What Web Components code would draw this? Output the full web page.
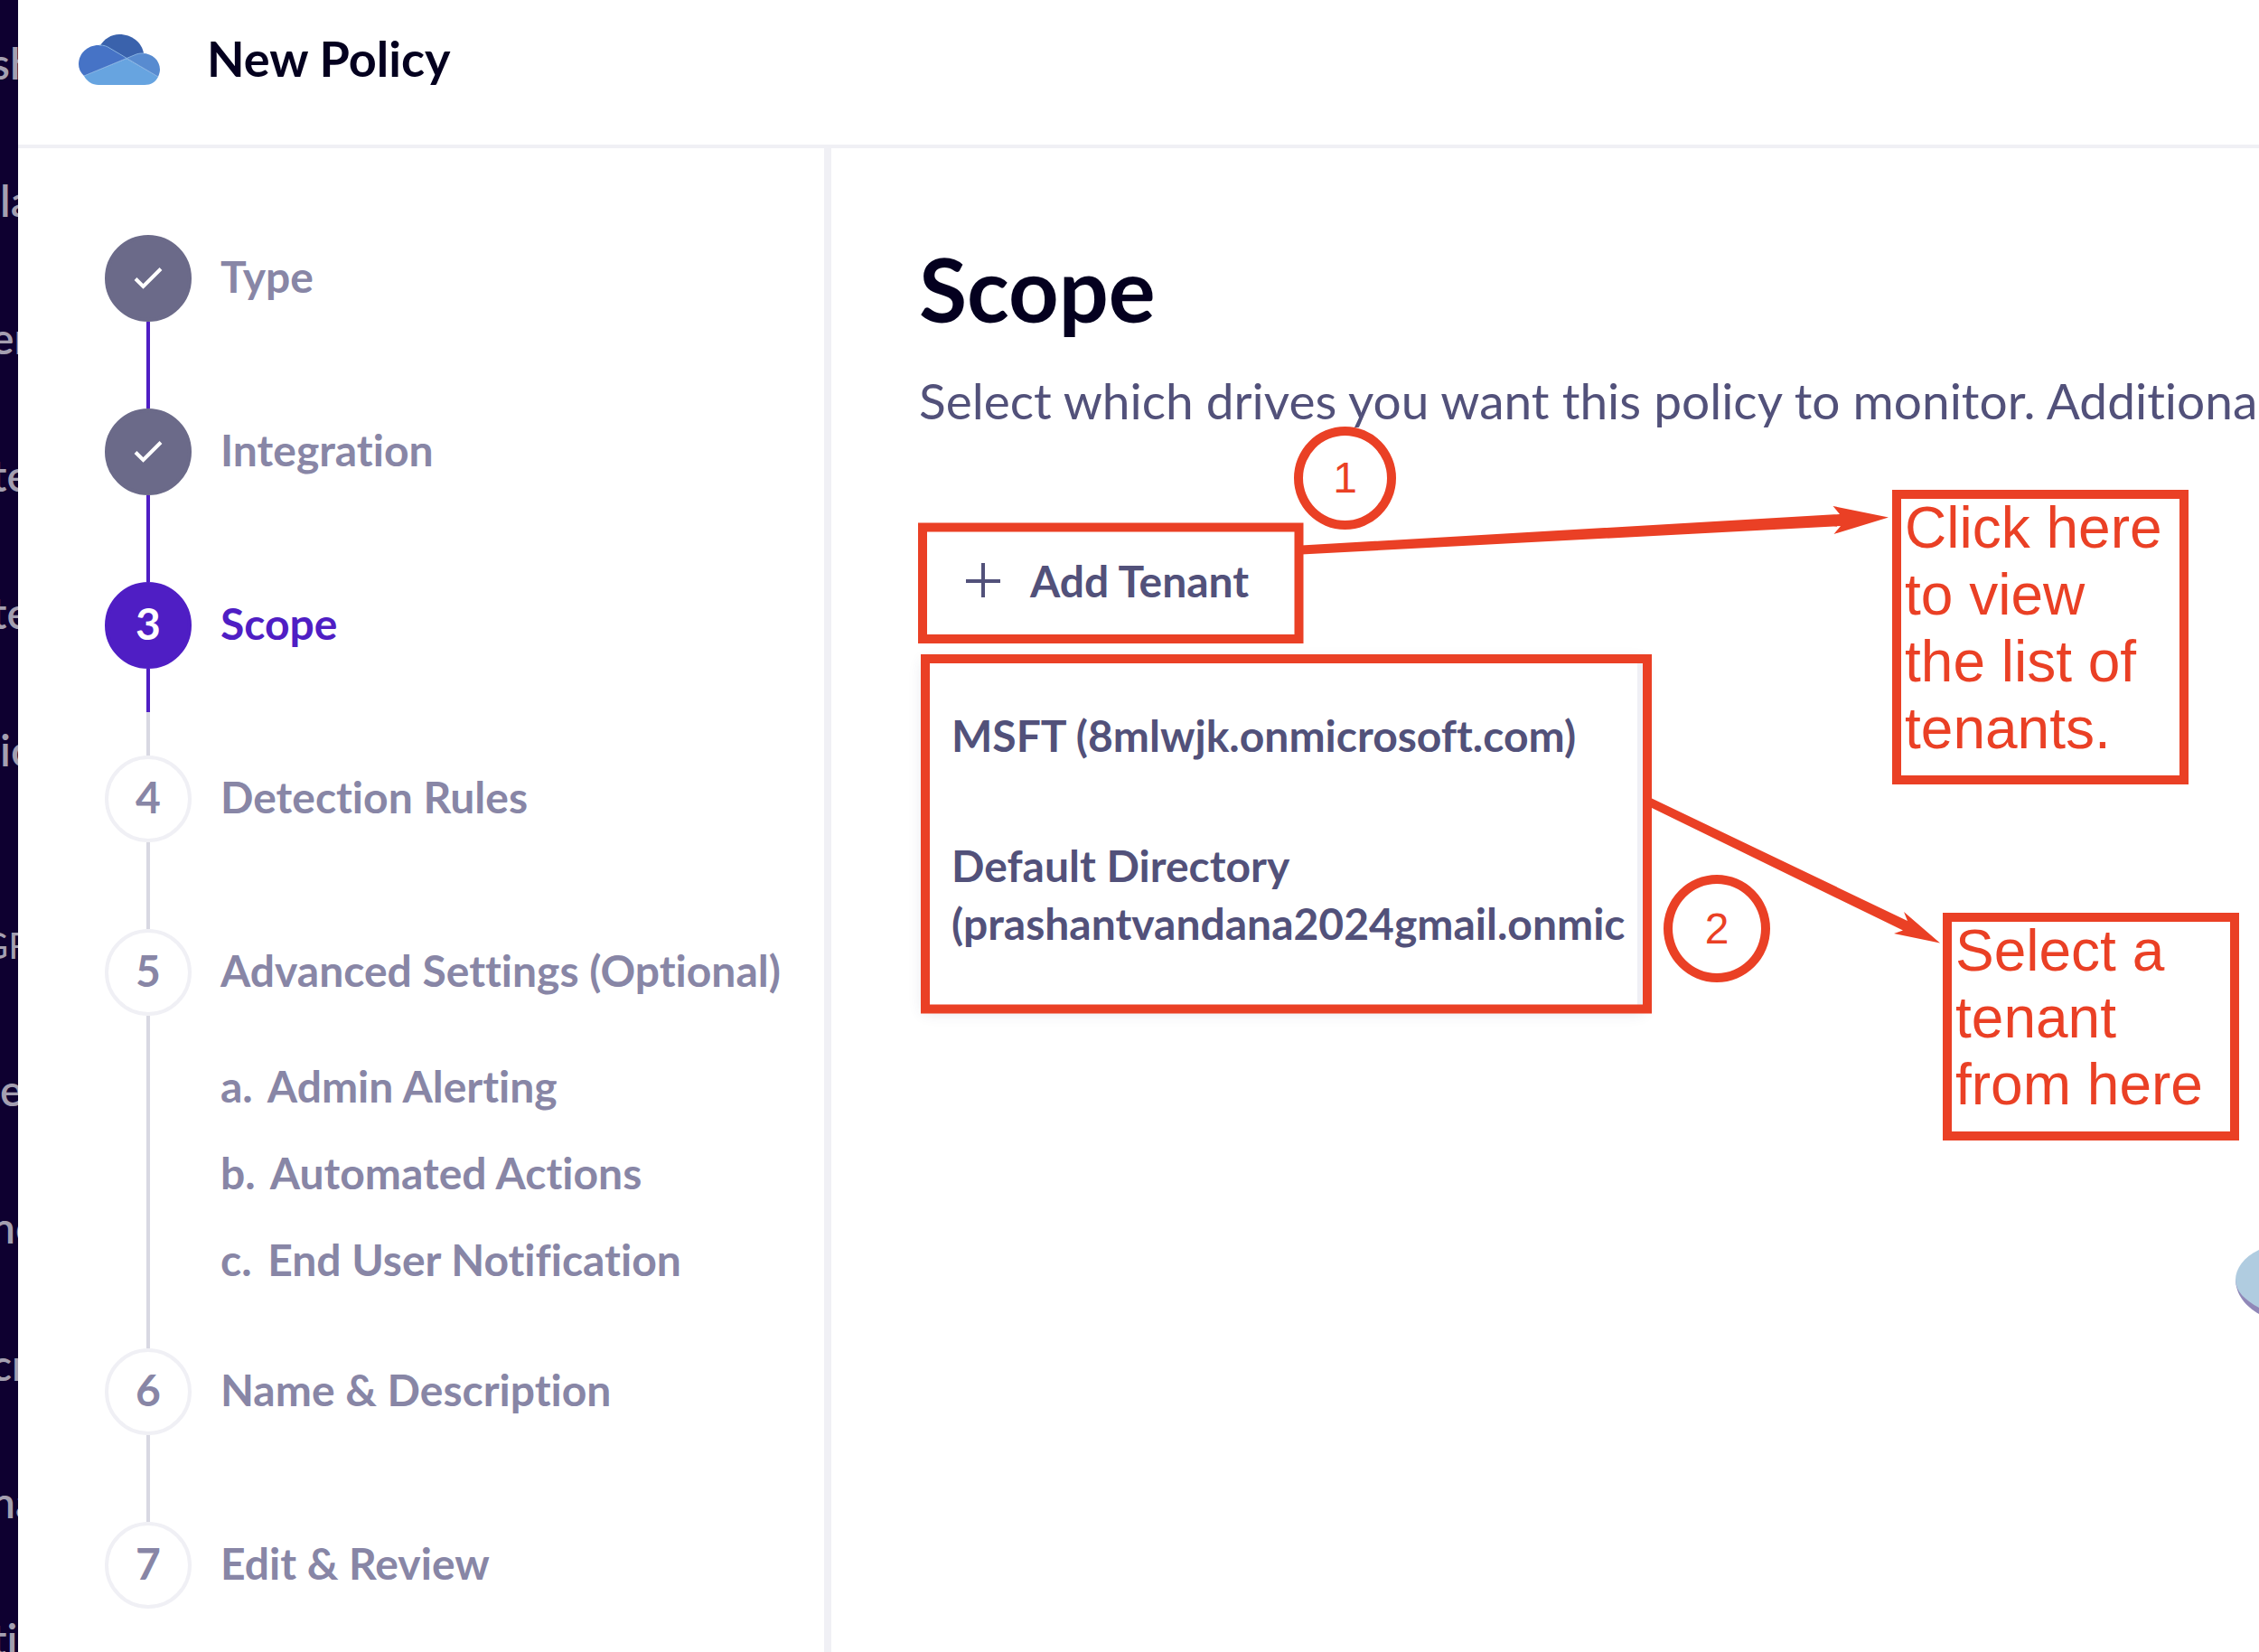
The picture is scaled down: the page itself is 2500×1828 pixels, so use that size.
<!DOCTYPE html>
<html lang="en">
<head>
<meta charset="utf-8">
<title>New Policy</title>
<style>
  body { margin: 0; font-family: Lato, "Open Sans", sans-serif; font-variant-ligatures: none; background: #fff; }
</style>
</head>
<body>
<policy-page></policy-page>

<script>
const define = (name, html, setup) => {
  const template = document.createElement('template');
  template.innerHTML = html;
  customElements.define(name, class extends HTMLElement {
    connectedCallback() {
      if (this.shadowRoot) return;
      this.attachShadow({ mode: 'open' }).append(template.content.cloneNode(true));
      if (setup) setup(this, this.shadowRoot);
    }
  });
};

/* Slice of the app navigation left visible beside the dialog */
define('nav-sliver', `
  <style>
    :host { display: flex; flex-direction: column; gap: 96px; padding-top: 42px; background: #0e0030;
      color: #a49fb0; font-size: 48px; font-weight: 600; line-height: 56px; overflow: hidden; min-width: 0; }
    span { white-space: nowrap; }
    .cut { margin-left: -10px; }
    .group { margin: 64px 0 8px -20px; font-size: 40px; font-weight: 400; }
  </style>
  <span class="cut">sh</span><span>la</span><span class="cut">er</span><span class="cut">te</span>
  <span class="cut">te</span><span>ic</span><span class="group">GR</span><span>e</span>
  <span class="cut">nc</span><span class="cut">cr</span><span class="cut">na</span><span class="cut">ti</span>`);

define('cloud-logo', `
  <style>:host { display: block; } svg { display: block; }</style>
  <svg width="90" height="56" viewBox="0 0 90 56" aria-hidden="true">
    <path fill="#3a62ac" d="M23 14C28 5 36 0 45 0c14 0 25 9 27 21L53 27Z"/>
    <path fill="#4673c6" d="M6 46C2 42 0 38 0 33c0-12 10-21 22-21 5 0 8 1 12 3l19 12Z"/>
    <path fill="#588bd0" d="M53 27l11-5c14-4 26 5 26 17 0 3-1 5-2 8Z"/>
    <path fill="#67a4e0" d="M6 46 53 27l35 20c-3 6-8 9-15 9H22C15 56 9 52 6 46Z"/>
    <path fill="none" stroke="#86b1e2" stroke-width="1" d="M23 12c5 0 8 1 11 3l54 32M6 46l58-24c3-1 5-1 8-1"/>
  </svg>`);

define('page-header', `
  <style>
    :host { display: flex; align-items: flex-start; gap: 52px; padding: 38px 0 66px 67px; border-bottom: 4px solid #f0f0f5; }
    h1 { margin: 0; font-size: 54px; line-height: 54px; font-weight: 700; color: #04001f; }
  </style>
  <cloud-logo></cloud-logo><h1><slot></slot></h1>`);

/* One wizard step: marker, label, optional sub-items and the connector below */
define('wizard-step', `
  <style>
    :host { --top: #d8d8e2; --bottom: #d8d8e2; display: grid; grid-template-columns: 96px 1fr; column-gap: 32px;
      color: #8886a6; font-size: 48px; line-height: 96px; font-weight: 700; }
    .dot { box-sizing: border-box; width: 96px; height: 96px; border-radius: 50%; border: 4px solid #f0f0f5;
      display: flex; align-items: center; justify-content: center; line-height: 84px; padding-bottom: 4px; }
    .label { white-space: nowrap; line-height: 92px; }
    .line { justify-self: center; width: 4px; min-height: 96px;
      background: linear-gradient(var(--top) 50%, var(--bottom) 50%); }
    :host([last]) .line { display: none; }
    :host([done]) { --top: #4f1ec4; --bottom: #4f1ec4; }
    :host([done]) .dot { background: #6b6a89; border-color: #6b6a89; padding: 0; }
    :host([current]) { --top: #4f1ec4; color: #4f1ec4; }
    :host([current]) .dot { background: #4f1ec4; border-color: #4f1ec4; color: #fff; }
    ::slotted(ol) { list-style: none; margin: 0; padding: 30px 0 50px; }
  </style>
  <div class="dot"></div><div class="label"></div><div class="line"></div><slot></slot>`,
  (host, root) => {
    root.querySelector('.label').textContent = host.getAttribute('label');
    const dot = root.querySelector('.dot');
    if (host.hasAttribute('done')) {
      dot.innerHTML = '<svg width="32" height="26" viewBox="0 0 32 26" aria-label="Done"><path d="M2 13.500l8.500 8.500L30 2.500" fill="none" stroke="#fff" stroke-width="4"/></svg>';
    } else dot.textContent = host.getAttribute('number');
  });

define('wizard-steps', `
  <style>
    :host { display: block; padding: 96px 0 0 96px; border-right: 8px solid #f0f0f5; }
    li { white-space: nowrap; }
    li span { margin-right: 6px; }
  </style>
  <wizard-step done label="Type"></wizard-step>
  <wizard-step done label="Integration"></wizard-step>
  <wizard-step current number="3" label="Scope"></wizard-step>
  <wizard-step number="4" label="Detection Rules"></wizard-step>
  <wizard-step number="5" label="Advanced Settings (Optional)">
    <ol><li><span>a.</span> Admin Alerting</li><li><span>b.</span> Automated Actions</li><li><span>c.</span> End User Notification</li></ol>
  </wizard-step>
  <wizard-step number="6" label="Name &amp; Description"></wizard-step>
  <wizard-step last number="7" label="Edit &amp; Review"></wizard-step>`);

define('tenant-menu', `
  <style>
    :host { display: block; box-sizing: border-box; width: 796px; margin: 26px 0 0 5px; padding: 54px 0 62px 31px;
      border-right: 6px solid #f0f0f5; box-shadow: 0 4px 16px rgba(60, 60, 100, .14); }
    ul { list-style: none; margin: 0; padding: 0; display: flex; flex-direction: column; gap: 80px; overflow: hidden; }
    button { display: block; width: 100%; padding: 0; border: 0; background: none; text-align: left;
      font: inherit; font-size: 48px; font-weight: 700; line-height: 64px; color: #52517a; }
  </style>
  <ul>
    <li><button type="button">MSFT (8mlwjk.onmicrosoft.com)</button></li>
    <li><button type="button">Default Directory<br>(prashantvandana2024gmail.onmic</button></li>
  </ul>`);

define('scope-panel', `
  <style>
    :host { display: block; min-width: 0; overflow: hidden; padding: 100px 0 0 97px; color: #52517a; }
    h2 { margin: 0; font-size: 97px; line-height: 112px; font-weight: 700; color: #04001f; }
    p { margin: 27px 0 0; font-size: 55px; line-height: 80px; white-space: nowrap; }
    .add { display: flex; align-items: center; gap: 33px; height: 120px; margin: 99px 0 0; padding: 0 52px; border: 0;
      background: none; font: inherit; font-size: 48px; font-weight: 700; color: inherit; }
  </style>
  <h2>Scope</h2>
  <p>Select which drives you want this policy to monitor. Additiona</p>
  <button class="add" type="button">
    <svg width="38" height="40" viewBox="0 0 38 40" aria-hidden="true"><path d="M19 1v38M0 21h38" stroke="#52517a" stroke-width="4"/></svg>
    Add Tenant
  </button>
  <tenant-menu></tenant-menu>`);

/* Annotation pieces floating over the page */
define('note-box', `
  <style>
    :host { position: absolute; box-sizing: border-box; width: 328px; border: 10px solid #ea4025; padding: 0 4px 15px; color: #ea4025;
      font: 64px/74px "Liberation Sans", Arial, sans-serif; background: #fff; }
    p { margin: -5px 0 0; white-space: nowrap; }
  </style>
  <p><slot></slot></p>`);

define('note-number', `
  <style>
    :host { position: absolute; box-sizing: border-box; display: flex; align-items: center; justify-content: center;
      border: 10px solid #ea4025; border-radius: 50%; color: #ea4025; font: 48px/48px "Liberation Sans", Arial, sans-serif; }
  </style>
  <slot></slot>`);

define('note-layer', `
  <style>
    :host { position: absolute; inset: 0; pointer-events: none; overflow: hidden; }
    svg { position: absolute; left: 0; top: 0; }
    .n1 { left: 1432px; top: 472px; width: 113px; height: 114px; }
    .n2 { left: 1841px; top: 968px; width: 118px; height: 119px; }
    .b1 { left: 2094px; top: 542px; }
    .b2 { left: 2150px; top: 1010px; }
  </style>
  <svg width="2500" height="1828" viewBox="0 0 2500 1828" aria-hidden="true">
    <path fill="#9088b8" d="M2474 1415c0 18 12 31 26 39v-20Z"/>
    <path fill="#b0cce0" d="M2500 1383c-17 8-26 21-26 33 0 13 11 23 26 31Z"/>
    <g fill="none" stroke="#ea4025" stroke-width="10">
      <path d="M1021 583.500H1437.500V707H1021Z"/><path d="M1024 729H1823V1116.500H1024Z"/>
    </g>
    <g fill="#ea4025">
      <path d="M1440 603.500 2036 569l-7.500-9L2090 572.500 2029.500 591l7.500-9L1440 613.500Z"/>
      <path d="M1826 882.500 2111 1019l-4-10 40 34.500-51-10.500 10-3.500L1826 893Z"/>
    </g>
  </svg>
  <note-number class="n1">1</note-number>
  <note-number class="n2">2</note-number>
  <note-box class="b1">Click here<br>to view<br>the list of<br>tenants.</note-box>
  <note-box class="b2">Select a<br>tenant<br>from here</note-box>`);

define('policy-page', `
  <style>
    :host { position: relative; display: grid; grid-template-columns: 20px minmax(0, 1fr); height: 100vh; overflow: hidden; }
    .dialog { display: grid; grid-template-rows: auto 1fr; background: #fff; min-height: 0; }
    .body { display: grid; grid-template-columns: 900px minmax(0, 1fr); min-height: 0; }
  </style>
  <nav-sliver></nav-sliver>
  <div class="dialog">
    <page-header>New Policy</page-header>
    <div class="body"><wizard-steps></wizard-steps><scope-panel></scope-panel></div>
  </div>
  <note-layer></note-layer>`);
</script>
</body>
</html>
